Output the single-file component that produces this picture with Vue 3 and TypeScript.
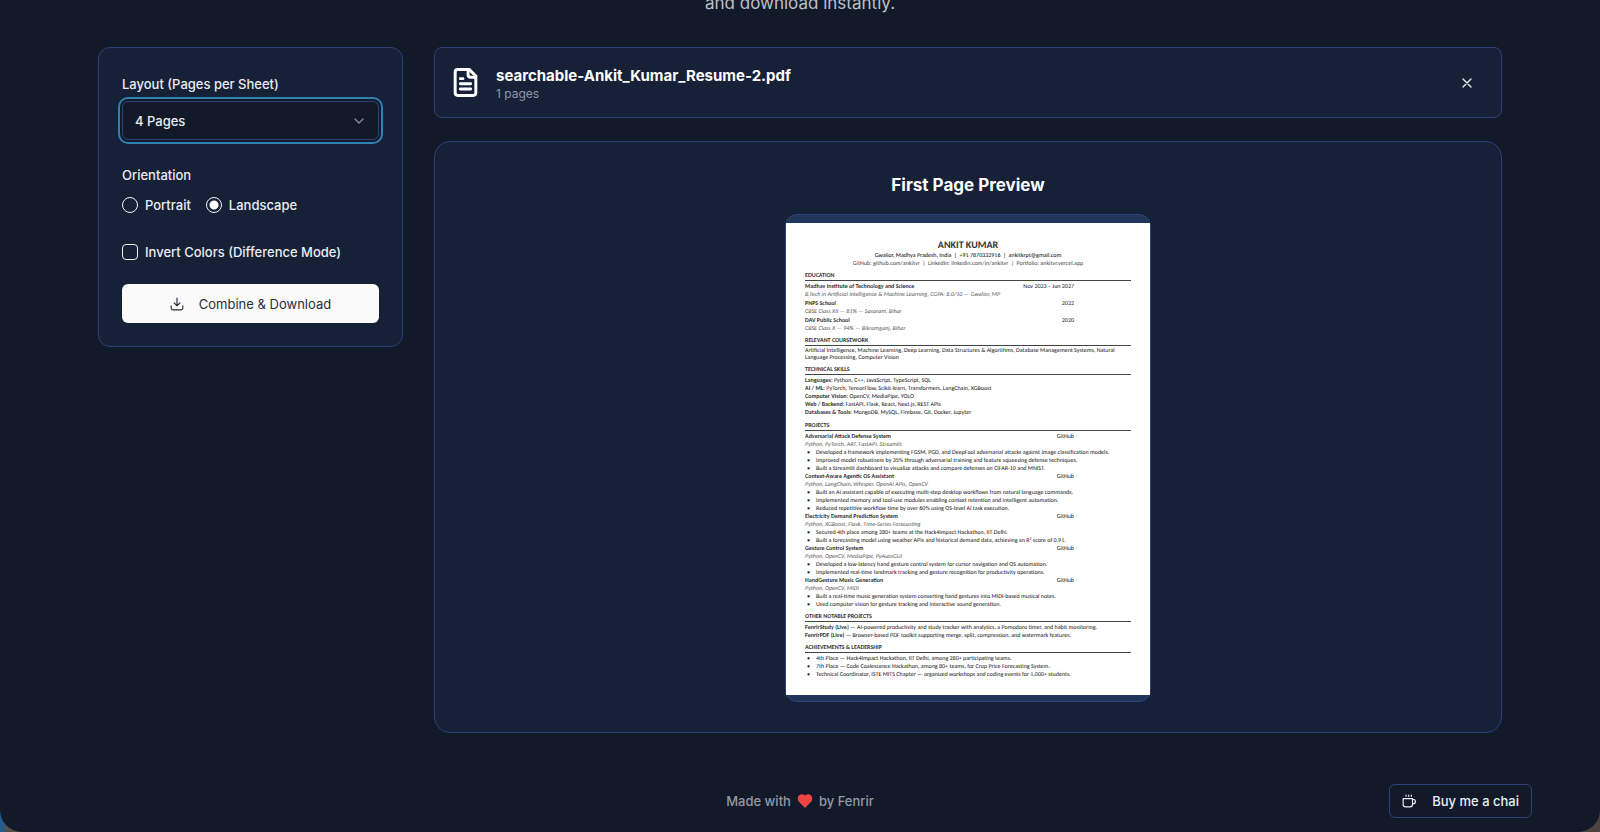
<script setup lang="ts">
import { ref } from 'vue'

interface Entry { title: string; date: string; detail: string }
interface Project { title: string; stack: string; points: string[] }

const pages = ref('4')
const orientation = ref('landscape')
const invert = ref(false)

const education: Entry[] = [
  { title: 'Madhav Institute of Technology and Science', date: 'Nov 2023 – Jun 2027', detail: 'B.Tech in Artificial Intelligence & Machine Learning, CGPA: 8.0/10 — Gwalior, MP' },
  { title: 'PNPS School', date: '2022', detail: 'CBSE Class XII — 81% — Sasaram, Bihar' },
  { title: 'DAV Public School', date: '2020', detail: 'CBSE Class X — 94% — Bikramganj, Bihar' },
]

const skills: [string, string][] = [
  ['Languages:', 'Python, C++, JavaScript, TypeScript, SQL'],
  ['AI / ML:', 'PyTorch, TensorFlow, Scikit-learn, Transformers, LangChain, XGBoost'],
  ['Computer Vision:', 'OpenCV, MediaPipe, YOLO'],
  ['Web / Backend:', 'FastAPI, Flask, React, Next.js, REST APIs'],
  ['Databases & Tools:', 'MongoDB, MySQL, Firebase, Git, Docker, Jupyter'],
]

const projects: Project[] = [
  {
    title: 'Adversarial Attack Defense System',
    stack: 'Python, PyTorch, ART, FastAPI, Streamlit',
    points: [
      'Developed a framework implementing FGSM, PGD, and DeepFool adversarial attacks against image classification models.',
      'Improved model robustness by 35% through adversarial training and feature squeezing defense techniques.',
      'Built a Streamlit dashboard to visualize attacks and compare defenses on CIFAR-10 and MNIST.',
    ],
  },
  {
    title: 'Context-Aware Agentic OS Assistant',
    stack: 'Python, LangChain, Whisper, OpenAI APIs, OpenCV',
    points: [
      'Built an AI assistant capable of executing multi-step desktop workflows from natural language commands.',
      'Implemented memory and tool-use modules enabling context retention and intelligent automation.',
      'Reduced repetitive workflow time by over 60% using OS-level AI task execution.',
    ],
  },
  {
    title: 'Electricity Demand Prediction System',
    stack: 'Python, XGBoost, Flask, Time-Series Forecasting',
    points: [
      'Secured 4th place among 280+ teams at the Hack4Impact Hackathon, IIT Delhi.',
      'Built a forecasting model using weather APIs and historical demand data, achieving an R² score of 0.91.',
    ],
  },
  {
    title: 'Gesture Control System',
    stack: 'Python, OpenCV, MediaPipe, PyAutoGUI',
    points: [
      'Developed a low-latency hand gesture control system for cursor navigation and OS automation.',
      'Implemented real-time landmark tracking and gesture recognition for productivity operations.',
    ],
  },
  {
    title: 'HandGesture Music Generation',
    stack: 'Python, OpenCV, MIDI',
    points: [
      'Built a real-time music generation system converting hand gestures into MIDI-based musical notes.',
      'Used computer vision for gesture tracking and interactive sound generation.',
    ],
  },
]

const others: [string, string][] = [
  ['FenrirStudy (Live)', '— AI-powered productivity and study tracker with analytics, a Pomodoro timer, and habit monitoring.'],
  ['FenrirPDF (Live)', '— Browser-based PDF toolkit supporting merge, split, compression, and watermark features.'],
]

const achievements: string[] = [
  '4th Place — Hack4Impact Hackathon, IIT Delhi, among 280+ participating teams.',
  '7th Place — Code Coalescence Hackathon, among 80+ teams, for Crop Price Forecasting System.',
  'Technical Coordinator, ISTE MITS Chapter — organized workshops and coding events for 1,000+ students.',
]
</script>

<template>
  <div class="window">
    <p class="intro">and download instantly.</p>

    <main class="layout">
      <form class="card settings" @submit.prevent>
        <label class="label" for="pages">Layout (Pages per Sheet)</label>
        <div class="select-wrap">
          <select id="pages" v-model="pages" class="select">
            <option value="2">2 Pages</option>
            <option value="4">4 Pages</option>
            <option value="6">6 Pages</option>
          </select>
          <svg class="chevron" viewBox="0 0 24 24" aria-hidden="true"><path d="m6 9 6 6 6-6" /></svg>
        </div>

        <fieldset class="group">
          <legend class="label">Orientation</legend>
          <div class="radios">
            <label class="choice"><input v-model="orientation" type="radio" name="orientation" value="portrait" />Portrait</label>
            <label class="choice"><input v-model="orientation" type="radio" name="orientation" value="landscape" />Landscape</label>
          </div>
        </fieldset>

        <label class="choice invert"><input v-model="invert" type="checkbox" />Invert Colors (Difference Mode)</label>

        <button class="primary" type="submit">
          <svg class="icon" viewBox="0 0 24 24" aria-hidden="true"><path d="M12 2v13M7 10l5 5 5-5M2 15v4a3 3 0 0 0 3 3h14a3 3 0 0 0 3-3v-4" /></svg>
          Combine &amp; Download
        </button>
      </form>

      <div class="content">
        <section class="card file">
          <svg class="doc" viewBox="0 0 24 24" aria-hidden="true">
            <path d="M15 2H6a2 2 0 0 0-2 2v16a2 2 0 0 0 2 2h12a2 2 0 0 0 2-2V7Z" />
            <path d="M14 2v4a2 2 0 0 0 2 2h4M10 9H8M16 13H8M16 17H8" />
          </svg>
          <div class="file-info">
            <h2 class="file-name">searchable-Ankit_Kumar_Resume-2.pdf</h2>
            <p class="file-meta">1 pages</p>
          </div>
          <button class="close" type="button" aria-label="Remove file">
            <svg viewBox="0 0 24 24" aria-hidden="true"><path d="M18 6 6 18M6 6l12 12" /></svg>
          </button>
        </section>

        <section class="card preview">
          <h2 class="preview-title">First Page Preview</h2>
          <div class="sheet">
            <article class="paper">
              <h3 class="name">ANKIT KUMAR</h3>
              <p class="contact strong">Gwalior, Madhya Pradesh, India &nbsp;|&nbsp; +91 7870332916 &nbsp;|&nbsp; ankitkrpt@gmail.com</p>
              <p class="contact">GitHub: github.com/ankitvr &nbsp;|&nbsp; LinkedIn: linkedin.com/in/ankitvr &nbsp;|&nbsp; Portfolio: ankitvr.vercel.app</p>

              <h4 class="heading">EDUCATION</h4>
              <div class="entries">
                <div v-for="e in education" :key="e.title">
                  <div class="row"><b>{{ e.title }}</b><span>{{ e.date }}</span></div>
                  <p class="note">{{ e.detail }}</p>
                </div>
              </div>

              <h4 class="heading">RELEVANT COURSEWORK</h4>
              <p class="para">Artificial Intelligence, Machine Learning, Deep Learning, Data Structures &amp; Algorithms, Database Management Systems, Natural<br />Language Processing, Computer Vision</p>

              <h4 class="heading">TECHNICAL SKILLS</h4>
              <div class="skills">
                <p v-for="s in skills" :key="s[0]"><b>{{ s[0] }}</b> {{ s[1] }}</p>
              </div>

              <h4 class="heading">PROJECTS</h4>
              <div v-for="p in projects" :key="p.title">
                <div class="row"><b>{{ p.title }}</b><span>GitHub</span></div>
                <p class="note">{{ p.stack }}</p>
                <ul class="points"><li v-for="t in p.points" :key="t">{{ t }}</li></ul>
              </div>

              <h4 class="heading">OTHER NOTABLE PROJECTS</h4>
              <p v-for="o in others" :key="o[0]"><b>{{ o[0] }}</b> {{ o[1] }}</p>

              <h4 class="heading">ACHIEVEMENTS &amp; LEADERSHIP</h4>
              <ul class="points"><li v-for="a in achievements" :key="a">{{ a }}</li></ul>
            </article>
          </div>
        </section>
      </div>
    </main>

    <footer class="footer">
      <p class="credit">
        Made with
        <svg class="heart" viewBox="0 0 24 24" role="img" aria-label="love"><path d="M19 14c1.500-1.500 3-3.200 3-5.500A5.500 5.500 0 0 0 16.500 3c-1.800 0-3 .5-4.500 2-1.500-1.500-2.700-2-4.500-2A5.500 5.500 0 0 0 2 8.500c0 2.300 1.500 4 3 5.500l7 7Z" /></svg>
        by Fenrir
      </p>
      <a class="chai" href="#">
        <svg class="icon" viewBox="0 0 24 24" aria-hidden="true"><path d="M7 2v2M11.500 2v2M16 2v2M2 8h16v10a4 4 0 0 1-4 4H6a4 4 0 0 1-4-4ZM18 9h1a4 4 0 0 1 0 8h-1" /></svg>
        Buy me a chai
      </a>
    </footer>
  </div>
</template>

<style>
body {
  margin: 0;
  background: linear-gradient(90deg, #1d5f9c 0, #5c4c3a 10px, #4e4340 100%);
}
</style>

<style scoped>
* {
  box-sizing: border-box;
}
h2, h3, h4, p, ul, fieldset {
  margin: 0;
  padding: 0;
}
.window {
  min-height: 100vh;
  background: #121a2a;
  color: #e9edf3;
  font-family: Inter, "Liberation Sans", sans-serif;
  font-size: 13px;
  font-weight: 500;
  line-height: 20px;
  border-radius: 0 0 22px 22px;
  overflow: hidden;
  display: flex;
  flex-direction: column;
}
.intro {
  height: 47px;
  margin-top: -11px;
  margin-bottom: 11px;
  text-align: center;
  font-size: 17px;
  font-weight: 400;
  line-height: 28px;
  color: #bcc0c8;
}
.layout {
  display: grid;
  grid-template-columns: 305px 1fr;
  gap: 31px;
  align-items: start;
  padding: 0 98px;
}
.card {
  background: #162037;
  border: 1px solid #2b437a;
  border-radius: 12px;
}
.settings {
  padding: 26px 23px 23px;
}
.label {
  display: block;
  padding: 0;
  margin-bottom: 7px;
}
.select-wrap {
  position: relative;
}
.select {
  display: block;
  width: 100%;
  height: 39px;
  padding: 0 12px;
  appearance: none;
  font: inherit;
  color: inherit;
  background: #121a2a;
  border: 1px solid #2b437a;
  border-radius: 6px;
  outline: none;
  box-shadow: 0 0 0 2px #121a2a, 0 0 0 4px #2f82b0;
}
.chevron {
  position: absolute;
  right: 12px;
  top: 12px;
  width: 16px;
  pointer-events: none;
  stroke: #828a9b;
}
svg {
  flex: none;
  fill: none;
  stroke: currentColor;
  stroke-width: 2;
  stroke-linecap: round;
  stroke-linejoin: round;
}
.group {
  border: 0;
  margin-top: 25px;
}
.radios {
  display: flex;
  gap: 15px;
  padding-top: 3px;
}
.choice {
  display: flex;
  align-items: center;
  gap: 7px;
}
.choice input {
  appearance: none;
  width: 16px;
  height: 16px;
  margin: 0;
  border: 1px solid #f1f5f9;
  border-radius: 4px;
}
.choice input[type="radio"] {
  border-radius: 50%;
}
.choice input[type="radio"]:checked {
  background: radial-gradient(circle, #fff 4px, transparent 5px);
}
.invert {
  margin-top: 27px;
}
.primary {
  display: flex;
  align-items: center;
  justify-content: center;
  gap: 15px;
  width: 100%;
  height: 39px;
  margin-top: 22px;
  border: 0;
  border-radius: 6px;
  background: #fafafa;
  color: #2b2f38;
  font: inherit;
  font-weight: 400;
}
.icon {
  width: 14px;
  height: 14px;
}
.content {
  display: grid;
  gap: 23px;
  min-width: 0;
}
.file {
  display: flex;
  align-items: center;
  gap: 15px;
  height: 71px;
  padding: 0 15px;
  border-radius: 8px;
}
.doc {
  width: 31px;
  height: 31px;
  color: #fff;
  stroke-width: 2.300;
}
.file-info {
  flex: 1;
  padding-top: 2px;
}
.file-name {
  font-size: 15px;
  line-height: 20px;
  font-weight: 700;
  color: #fff;
}
.file-meta {
  font-size: 12px;
  font-weight: 400;
  line-height: 16px;
  color: #8f98aa;
}
.close {
  display: grid;
  place-items: center;
  width: 38px;
  height: 38px;
  border: 0;
  padding: 0;
  background: none;
  color: inherit;
}
.close svg {
  width: 16px;
  height: 16px;
}
.preview {
  display: flex;
  flex-direction: column;
  align-items: center;
  gap: 15px;
  padding: 30px;
  border-radius: 16px;
}
.preview-title {
  font-size: 17px;
  line-height: 27px;
  font-weight: 700;
  color: #fff;
}
.sheet {
  width: 366px;
  padding: 8px 0 6px;
  background: #21345a;
  border: 1px solid #2b437a;
  border-radius: 12px;
}
.paper {
  height: 472px;
  padding: 15px 19px 0;
  background: #fff;
  color: #111;
  font-family: Carlito, Lato, "Liberation Sans", sans-serif;
  font-size: 6px;
  font-weight: 300;
  line-height: 8px;
  white-space: nowrap;
  text-rendering: geometricPrecision;
}
.paper b {
  font-weight: 700;
  color: #333;
}
.name {
  font-size: 10px;
  line-height: 13px;
  font-weight: 700;
  text-align: center;
  color: #333;
}
.contact {
  text-align: center;
  color: #444;
}
.contact.strong {
  color: #000;
}
.heading {
  margin: 4px 0 1px;
  padding-bottom: 1px;
  border-bottom: 1px solid #444;
  font-size: 6px;
  line-height: 8px;
  font-weight: 700;
  color: #333;
}
.entries {
  display: grid;
  gap: 1px;
}
.para {
  line-height: 7px;
}
.skills {
  padding-bottom: 1px;
}
.row {
  display: flex;
  justify-content: space-between;
  padding-right: 57px;
}
.note {
  font-style: italic;
  color: #555;
}
.points {
  list-style: none;
}
.points li {
  display: flex;
}
.points li::before {
  content: "•";
  flex: none;
  width: 9px;
  padding-left: 2px;
}
.footer {
  display: grid;
  grid-template-columns: 1fr auto 1fr;
  align-items: center;
  margin-top: 51px;
  padding: 0 68px;
}
.credit {
  grid-column: 2;
  display: flex;
  align-items: center;
  gap: 6px;
  color: #9299a8;
}
.heart {
  width: 16px;
  height: 16px;
  fill: #ef4444;
  stroke: #ef4444;
}
.chai {
  justify-self: end;
  display: flex;
  align-items: center;
  gap: 16px;
  height: 34px;
  padding: 0 12px;
  border: 1px solid #2b437a;
  border-radius: 6px;
  color: inherit;
  text-decoration: none;
}
</style>
